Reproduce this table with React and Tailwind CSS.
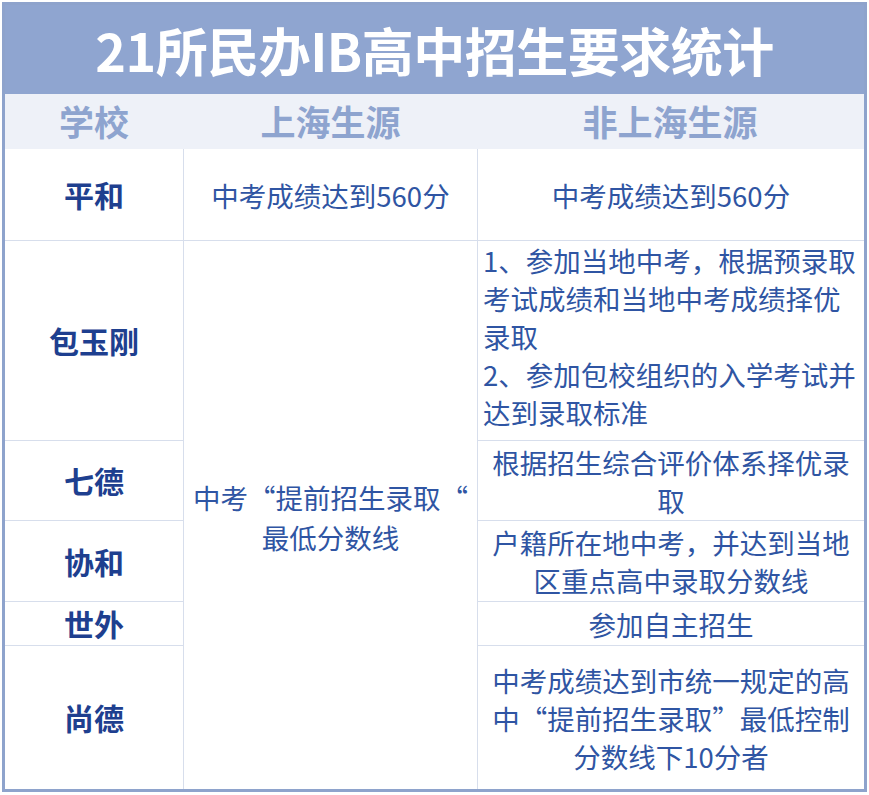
const font = { fontFamily: '"Noto Sans CJK SC", "Noto Sans", sans-serif' }

const schools = [
  { name: '平和', h: 'h-[91px]' },
  { name: '包玉刚', h: 'h-[199px]' },
  { name: '七德', h: 'h-[79px]' },
  { name: '协和', h: 'h-[80px]' },
  { name: '世外', h: 'h-[43px]' },
  { name: '尚德', h: 'h-[143px]' },
]

function Lines({ lines, left }) {
  return (
    <div className={`text-[27.5px] leading-[38px] text-[#2f55a3] whitespace-nowrap ${left ? 'text-left self-stretch pl-[5px]' : 'text-center'}`}>
      {lines.map((l, i) => <div key={i}>{l}</div>)}
    </div>
  )
}

export default function App() {
  return (
    <div className="w-[869px] h-[795px] bg-white pt-[2px] pl-[2px]" style={font}>
      <div className="w-[865px] border-[3px] border-[#8ea3cc] bg-[#d7deec]">
        {/* 标题 */}
        <div className="h-[89px] bg-[#8fa5d0] flex items-center justify-center">
          <h1 className="text-white font-bold text-[52px] leading-none tracking-[-0.5px]">21所民办IB高中招生要求统计</h1>
        </div>

        {/* 表头 */}
        <div className="h-[55px] bg-[#eef1f8] grid grid-cols-[178px_293px_1fr] items-center text-[35px] font-bold text-[#8ea4cf]">
          <div className="text-center">学校</div>
          <div className="text-center pl-[2px]">上海生源</div>
          <div className="text-center">非上海生源</div>
        </div>

        {/* 表体 */}
        <div className="grid grid-cols-[178px_293px_1fr] gap-px">
          {schools.map((s, i) => (
            <div key={s.name} className={`${s.h} bg-white flex items-center justify-center text-[30px] font-bold text-[#1e3f8f]`}
              style={{ gridColumn: 1, gridRow: i + 1 }}>
              {s.name}
            </div>
          ))}

          <div className="bg-white flex items-center justify-center" style={{ gridColumn: 2, gridRow: 1 }}>
            <Lines lines={['中考成绩达到560分']} />
          </div>
          <div className="bg-white flex items-center justify-center pt-[4px]" style={{ gridColumn: 2, gridRow: '2 / 7' }}>
            <div className="text-[27.5px] leading-[40px] text-[#2f55a3] text-center whitespace-nowrap">
              <div>中考“提前招生录取“</div>
              <div>最低分数线</div>
            </div>
          </div>

          <div className="bg-white flex items-center justify-center" style={{ gridColumn: 3, gridRow: 1 }}>
            <Lines lines={['中考成绩达到560分']} />
          </div>
          <div className="bg-white flex items-center" style={{ gridColumn: 3, gridRow: 2 }}>
            <Lines left lines={['1、参加当地中考，根据预录取', '考试成绩和当地中考成绩择优', '录取', '2、参加包校组织的入学考试并', '达到录取标准']} />
          </div>
          <div className="bg-white flex items-center justify-center" style={{ gridColumn: 3, gridRow: 3 }}>
            <Lines lines={['根据招生综合评价体系择优录', '取']} />
          </div>
          <div className="bg-white flex items-center justify-center" style={{ gridColumn: 3, gridRow: 4 }}>
            <Lines lines={['户籍所在地中考，并达到当地', '区重点高中录取分数线']} />
          </div>
          <div className="bg-white flex items-center justify-center" style={{ gridColumn: 3, gridRow: 5 }}>
            <Lines lines={['参加自主招生']} />
          </div>
          <div className="bg-white flex items-center justify-center" style={{ gridColumn: 3, gridRow: 6 }}>
            <Lines lines={['中考成绩达到市统一规定的高', '中“提前招生录取”最低控制', '分数线下10分者']} />
          </div>
        </div>
      </div>
    </div>
  )
}
